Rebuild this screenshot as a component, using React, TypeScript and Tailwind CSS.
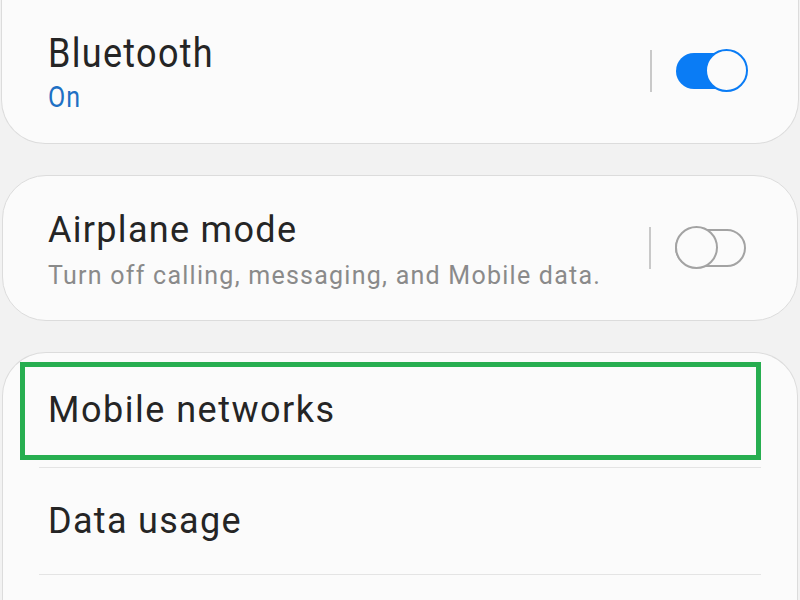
function Toggle({ on }: { on: boolean }) {
  return (
    <div className="flex items-center gap-[24px]">
      <div className="h-[42px] w-[2px] bg-[#c9c9c9]" />
      <div className="relative h-[44px] w-[72px]">
        {on ? (
          <>
            <div className="absolute left-0 top-[4px] h-[36px] w-[60px] rounded-full bg-[#0a7cf5]" />
            <div className="absolute right-0 top-0 h-[43px] w-[43px] rounded-full border-[2px] border-[#0a7cf5] bg-[#fbfbfb]" />
          </>
        ) : (
          <>
            <div className="absolute left-0 top-[3px] h-[38px] w-[71px] rounded-full border-[2px] border-[#a3a3a3]" />
            <div className="absolute left-0 top-0 h-[43px] w-[43px] rounded-full border-[2px] border-[#a3a3a3] bg-[#fbfbfb]" />
          </>
        )}
      </div>
    </div>
  );
}

export default function App() {
  return (
    <div
      className="h-[600px] w-[800px] overflow-hidden bg-[#f2f2f2]"
      style={{ fontFamily: 'Roboto, "Noto Sans", sans-serif' }}
    >
      {/* Bluetooth */}
      <div className="-mt-[2px] mx-[1px] flex h-[146px] items-center justify-between rounded-b-[44px] border border-t-0 border-[#dcdcdc] bg-[#fbfbfb] pl-[46px] pr-[50px]">
        <div className="mt-[3px] origin-center scale-y-[1.15]">
          <div className="text-[36px] leading-[44px] tracking-[1.3px] text-[#252525]">Bluetooth</div>
          <div className="text-[25px] leading-[32px] tracking-[1px] text-[#1e70c4]">On</div>
        </div>
        <Toggle on />
      </div>

      {/* Airplane mode */}
      <div className="mx-[2px] mt-[31px] flex h-[146px] items-center justify-between rounded-[44px] border border-[#dcdcdc] bg-[#fbfbfb] pl-[45px] pr-[50px]">
        <div className="mt-[4px] flex flex-col gap-[8px]">
          <div className="text-[36px] leading-[44px] tracking-[1.3px] text-[#252525]">Airplane mode</div>
          <div className="text-[25px] leading-[32px] tracking-[1.25px] text-[#8a8a8a]">
            Turn off calling, messaging, and Mobile data.
          </div>
        </div>
        <Toggle on={false} />
      </div>

      {/* Network list */}
      <div className="relative mx-[2px] mt-[31px] rounded-t-[44px] border border-b-0 border-[#dcdcdc] bg-[#fbfbfb]">
        <div className="flex h-[114px] items-center pl-[45px] text-[36px] tracking-[1.5px] text-[#252525]">
          Mobile networks
        </div>
        <div className="mx-[36px] h-[1px] bg-[#e4e4e4]" />
        <div className="flex h-[106px] items-center pl-[45px] text-[36px] tracking-[1.3px] text-[#252525]">
          Data usage
        </div>
        <div className="mx-[36px] h-[1px] bg-[#e4e4e4]" />
        <div className="h-[60px]" />
        <div className="absolute left-[17px] top-[9px] h-[98px] w-[741px] border-[5px] border-[#27ae50]" />
      </div>
    </div>
  );
}
